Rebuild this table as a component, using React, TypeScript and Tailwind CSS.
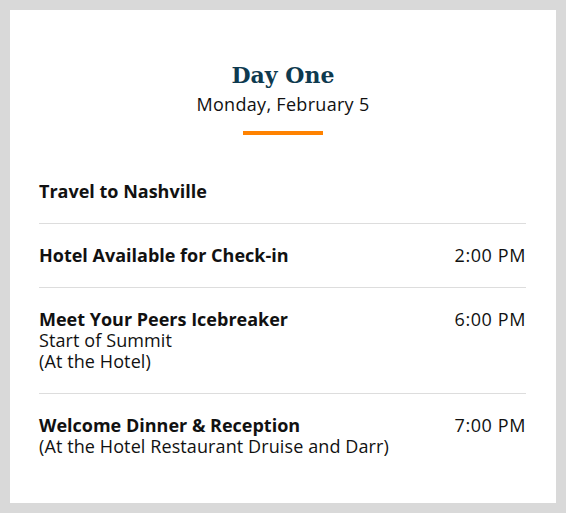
import React from "react";

const rows = [
  { title: "Travel to Nashville", sub: [] as string[], time: "" },
  { title: "Hotel Available for Check-in", sub: [], time: "2:00 PM" },
  { title: "Meet Your Peers Icebreaker", sub: ["Start of Summit", "(At the Hotel)"], time: "6:00 PM" },
  { title: "Welcome Dinner & Reception", sub: ["(At the Hotel Restaurant Druise and Darr)"], time: "7:00 PM" },
];

export default function App() {
  return (
    <div className="min-h-screen bg-[#d9d9d9] p-[10px]">
      <div className="bg-white h-[493px] px-[29px] pt-[50px] text-[#111] font-['Open_Sans','Liberation_Sans',sans-serif]">
        <div className="flex flex-col items-center">
          <h1 className="font-['DejaVu_Serif',serif] font-bold text-[22px] leading-[30px] text-[#0e3a4f]">Day One</h1>
          <div className="text-[18px] leading-[22px] mt-[3px] tracking-[0.3px]">Monday, February 5</div>
          <div className="w-[80px] h-[4px] bg-[#ff8200] mt-[16px]" />
        </div>
        <div className="mt-[25px] mr-[1px]">
          {rows.map((r, i) => (
            <div
              key={i}
              className={`flex justify-between pt-[21px] pb-[21px] ${i < rows.length - 1 ? "border-b border-[#dddddd]" : ""}`}
            >
              <div className="text-[18px] leading-[21px] tracking-[0.1px]">
                <div className="font-bold tracking-normal">{r.title}</div>
                {r.sub.map((s, j) => (
                  <div key={j}>{s}</div>
                ))}
              </div>
              {r.time && <div className="text-[18px] leading-[21px] tracking-[0.6px]">{r.time}</div>}
            </div>
          ))}
        </div>
      </div>
    </div>
  );
}
